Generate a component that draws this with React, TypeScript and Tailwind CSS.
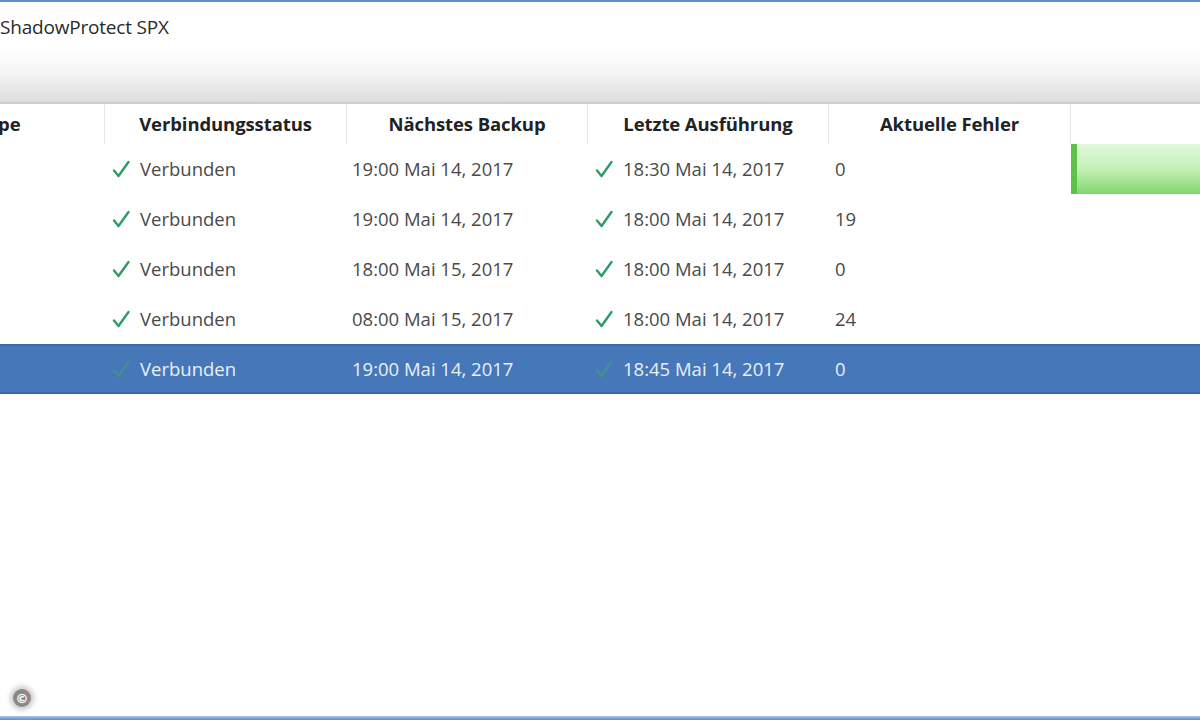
import React from 'react';

type Row = {
  status: string;
  next: string;
  last: string;
  errors: string;
  selected?: boolean;
  progress?: boolean;
};

const rows: Row[] = [
  { status: 'Verbunden', next: '19:00 Mai 14, 2017', last: '18:30 Mai 14, 2017', errors: '0', progress: true },
  { status: 'Verbunden', next: '19:00 Mai 14, 2017', last: '18:00 Mai 14, 2017', errors: '19' },
  { status: 'Verbunden', next: '18:00 Mai 15, 2017', last: '18:00 Mai 14, 2017', errors: '0' },
  { status: 'Verbunden', next: '08:00 Mai 15, 2017', last: '18:00 Mai 14, 2017', errors: '24' },
  { status: 'Verbunden', next: '19:00 Mai 14, 2017', last: '18:45 Mai 14, 2017', errors: '0', selected: true },
];

const Check = ({ dim }: { dim?: boolean }) => (
  <svg viewBox="0 0 20 20" className="w-[20px] h-[20px] shrink-0">
    <path
      d="M3 11.5 L7.5 17 L17.5 3"
      fill="none"
      stroke={dim ? '#3f9a86' : '#2f9a68'}
      strokeWidth="2.4"
      strokeLinecap="round"
      strokeLinejoin="round"
      opacity={dim ? 0.75 : 1}
    />
  </svg>
);

const App: React.FC = () => {
  return (
    <div className="w-[1200px] h-[720px] bg-white flex flex-col overflow-hidden font-['Open_Sans',sans-serif]">
      {/* window frame top */}
      <div className="h-[2px] bg-[#5b8fd0] shrink-0" />

      {/* title */}
      <div className="h-[46px] pt-[4px] flex items-center shrink-0 text-[19px] text-[#2a2a2a] tracking-[-0.2px]">
        ShadowProtect SPX
      </div>

      {/* toolbar */}
      <div className="h-[56px] shrink-0 bg-gradient-to-b from-white via-[#f4f4f4] to-[#dcdcdc] border-b-2 border-[#cdcdcd]" />

      {/* header */}
      <div className="h-[40px] flex shrink-0 text-[18.5px] font-bold text-[#222] tracking-[-0.1px]">
        <div className="w-[105px] flex items-center border-r border-[#e6e6e6]">
          <span className="-ml-[23px]">Type</span>
        </div>
        <div className="w-[242px] flex items-center justify-center border-r border-[#e6e6e6]">Verbindungsstatus</div>
        <div className="w-[241px] flex items-center justify-center border-r border-[#e6e6e6]">Nächstes Backup</div>
        <div className="w-[241px] flex items-center justify-center border-r border-[#e6e6e6]">Letzte Ausführung</div>
        <div className="w-[242px] flex items-center justify-center border-r border-[#e6e6e6]">Aktuelle Fehler</div>
        <div className="flex-1" />
      </div>

      {/* rows */}
      <div className="flex flex-col text-[18.5px] tracking-[0px]">
        {rows.map((r, i) => (
          <div
            key={i}
            className={
              r.selected
                ? 'h-[50px] flex bg-[#4677b8] text-[#e9f0fa] border-y-2 border-[#3b69a8]'
                : 'h-[50px] flex text-[#4a4a4a]'
            }
          >
            <div className="w-[105px]" />
            <div className="w-[242px] flex items-center gap-[9px] pl-[6px]">
              <Check dim={r.selected} />
              <span>{r.status}</span>
            </div>
            <div className="w-[241px] flex items-center pl-[5px]">{r.next}</div>
            <div className="w-[241px] flex items-center gap-[9px] pl-[6px]">
              <Check dim={r.selected} />
              <span>{r.last}</span>
            </div>
            <div className="w-[242px] flex items-center pl-[6px]">{r.errors}</div>
            <div className="flex-1 flex items-center">
              {r.progress && (
                <div className="w-full h-[50px] bg-gradient-to-b from-[#e2f8dc] via-[#c4f0b6] to-[#7fd66c] border-l-[6px] border-[#5cc346]" />
              )}
            </div>
          </div>
        ))}
      </div>

      <div className="flex-1" />

      {/* footer */}
      <div className="h-[22px] shrink-0 flex items-start pl-[13px]">
        <div className="w-[18px] h-[18px] rounded-full bg-[#8a8a8a] shadow-[0_0_5px_3px_rgba(0,0,0,0.2)] flex items-center justify-center -mt-[5px]">
          <span className="text-white text-[13px] font-bold leading-none font-['DejaVu_Sans',sans-serif]">©</span>
        </div>
      </div>
      <div className="h-[4px] shrink-0 bg-gradient-to-b from-[#a9c6ea] to-[#5b8fd0]" />
    </div>
  );
};

export default App;
